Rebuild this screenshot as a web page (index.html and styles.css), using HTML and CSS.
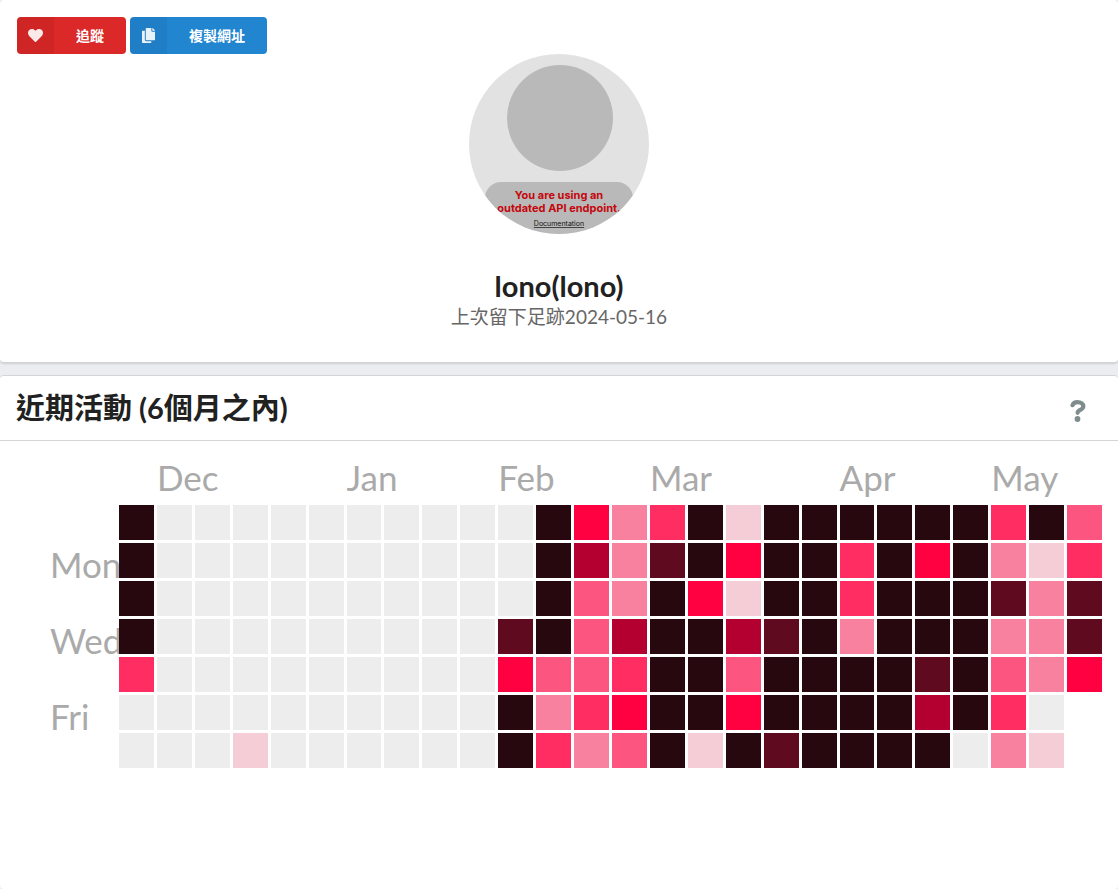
FILE: index.html
```
<!DOCTYPE html>
<html lang="zh-Hant">
<head>
<meta charset="utf-8">
<meta name="viewport" content="width=device-width, initial-scale=1">
<title>lono(lono)</title>
<link rel="stylesheet" href="styles.css">
</head>
<body>
<section class="segment profile">
  <div class="actions">
    <button type="button" class="button button-red">
      <span class="button-icon"><svg class="icon" viewBox="0 0 512 512" aria-hidden="true"><path d="M462.300 62.600C407.500 15.900 326 24.300 275.700 76.200L256 96.500l-19.700-20.300C186.100 24.300 104.500 15.900 49.700 62.600c-62.800 53.600-66.100 149.800-9.900 207.900l193.500 199.800c12.500 12.900 32.800 12.900 45.300 0l193.500-199.800c56.300-58.100 53-154.300-9.800-207.900z"/></svg></span>
      <span class="button-label">追蹤</span>
    </button>
    <button type="button" class="button button-blue">
      <span class="button-icon"><svg class="icon" viewBox="0 0 448 512" aria-hidden="true"><path d="M320 448v40c0 13.300-10.700 24-24 24H24c-13.300 0-24-10.700-24-24V120c0-13.300 10.700-24 24-24h72v296c0 30.900 25.100 56 56 56h168zm0-344V0H152c-13.300 0-24 10.700-24 24v368c0 13.300 10.700 24 24 24h272c13.300 0 24-10.700 24-24V128H344c-13.200 0-24-10.800-24-24zm121-31L375 7A24 24 0 0 0 358.100 0H352v96h96v-6.100a24 24 0 0 0-7-16.900z"/></svg></span>
      <span class="button-label">複製網址</span>
    </button>
  </div>
  <div class="identity">
    <svg class="avatar" viewBox="0 0 180 180" role="img" aria-label="lono">
      <defs><clipPath id="round"><circle cx="90" cy="90" r="90"/></clipPath></defs>
      <g clip-path="url(#round)">
        <rect width="180" height="180" fill="#e2e2e2"/>
        <circle cx="91" cy="64" r="53" fill="#b9b9b9"/>
        <rect x="16" y="128" width="148" height="80" rx="16" fill="#b9b9b9"/>
        <text class="avatar-warning" x="90" y="145">You are using an</text>
        <text class="avatar-warning" x="90" y="158">outdated API endpoint.</text>
        <text class="avatar-link" x="90" y="172">Documentation</text>
      </g>
    </svg>
    <h1 class="name">lono(lono)</h1>
    <p class="last-seen">上次留下足跡2024-05-16</p>
  </div>
</section>

<section class="segment activity">
  <header class="activity-header">
    <h2 class="activity-title">近期活動 (6個月之內)</h2>
    <button type="button" class="help" aria-label="說明"><svg class="help-icon" viewBox="0 0 16 22" aria-hidden="true"><path d="M2.500 5.200C3.200 3.200 5 2.200 7.500 2.200C10.800 2.200 13.300 3.800 13.300 6.400C13.300 9.800 7.600 9.800 7.600 12.800" fill="none" stroke="#7f8c8d" stroke-width="4.200" stroke-linecap="round"/><circle cx="7.500" cy="19" r="2.900" fill="#7f8c8d"/></svg></button>
  </header>
  <div class="heatmap" id="heatmap"></div>
</section>
<script src="heatmap.js"></script>
</body>
</html>
```
FILE: styles.css
```
* {
  box-sizing: border-box;
}

body {
  margin: 0;
  background: #ebedf0;
  color: #212121;
  font: 14px/20px Lato, "Noto Sans CJK TC", sans-serif;
  display: flex;
  flex-direction: column;
  gap: 12px;
  min-height: 100vh;
}

.segment {
  background: #fff;
  border: solid #d4d4d5;
  border-width: 1px 0;
  border-radius: 4px;
}

.profile {
  position: relative;
  border-top: 0;
  padding: 54px 16px 33px;
  box-shadow: 0 1px 2px rgba(34, 36, 38, 0.15);
}

.actions {
  position: absolute;
  top: 17px;
  left: 17px;
  display: flex;
  gap: 4px;
}

.button {
  display: flex;
  align-items: stretch;
  height: 37px;
  padding: 0;
  border: 0;
  border-radius: 4px;
  overflow: hidden;
  color: #fff;
  font: inherit;
  font-weight: 700;
  cursor: pointer;
}

.button-red {
  background: #db2828;
}

.button-blue {
  background: #2185d0;
}

.button-icon {
  display: flex;
  align-items: center;
  justify-content: center;
  width: 37px;
  background: rgba(0, 0, 0, 0.05);
}

.icon {
  height: 15px;
  fill: #fff;
  opacity: 0.9;
}

.button-label {
  align-self: center;
  padding: 0 22px;
}

.identity {
  display: flex;
  flex-direction: column;
  align-items: center;
  text-align: center;
}

.avatar {
  width: 180px;
  height: 180px;
}

.avatar-warning {
  fill: #c4070c;
  font: 700 11px Inter, sans-serif;
  text-anchor: middle;
}

.avatar-link {
  fill: #111;
  font: 7px Inter, sans-serif;
  text-anchor: middle;
  text-decoration: underline;
}

.name {
  margin: 34px 0 1px;
  font-size: 29px;
  line-height: 36px;
}

.last-seen {
  margin: 0;
  color: #666;
  font-size: 19px;
  line-height: 24px;
}

.activity {
  flex: 1;
  border-bottom: 0;
}

.activity-header {
  display: flex;
  align-items: center;
  justify-content: space-between;
  padding: 14px 32px 14px 16px;
  border-bottom: 1px solid #d4d4d5;
}

.activity-title {
  margin: 0;
  font-size: 29px;
  line-height: 36px;
}

.help {
  display: flex;
  padding: 5px 0 0;
  border: 0;
  background: none;
  cursor: pointer;
}

.help-icon {
  height: 22px;
}

.heatmap {
  display: grid;
  grid-template-columns: 66px repeat(26, minmax(0, 1fr));
  gap: 3px;
  padding: 15px 16px 16px 50px;
  color: #aaa;
  font-size: 35px;
}

.month,
.day {
  white-space: nowrap;
}

.month {
  width: 0;
  padding-bottom: 4px;
  line-height: 42px;
}

.day {
  display: flex;
  align-items: flex-end;
  height: 100%;
  min-height: 0;
  line-height: 28px;
}

.cell {
  aspect-ratio: 1;
}

.level-0 { background: #ededed; }
.level-1 { background: #f5cdd7; }
.level-2 { background: #f8819f; }
.level-3 { background: #fb5580; }
.level-4 { background: #ff2d62; }
.level-5 { background: #ff0040; }
.level-6 { background: #b30030; }
.level-7 { background: #5f0a1f; }
.level-8 { background: #27080f; }
```
FILE: heatmap.js
```
// One string per weekday, one digit (activity level) per week.
const weeks = [
  "80000000000852481888888483",
  "80000000000862785884858214",
  "80000000000832851884888727",
  "80000000007836886782888227",
  "40000000005334883888878325",
  "0000000000824588588886840",
  "0001000000842381878888021"
];
const days = ["", "Mon", "", "Wed", "", "Fri", ""];
const months = { 1: "Dec", 6: "Jan", 10: "Feb", 14: "Mar", 19: "Apr", 23: "May" };
const map = document.getElementById("heatmap");

function add(className, row, column, text) {
  const item = document.createElement("div");
  item.className = className;
  item.style.gridArea = row + " / " + column;
  item.textContent = text;
  map.append(item);
}

for (const [week, name] of Object.entries(months)) {
  add("month", 1, Number(week) + 2, name);
}
weeks.forEach((levels, day) => {
  if (days[day]) add("day", day + 2, 1, days[day]);
  [...levels].forEach((level, week) => add("cell level-" + level, day + 2, week + 2, ""));
});
```
